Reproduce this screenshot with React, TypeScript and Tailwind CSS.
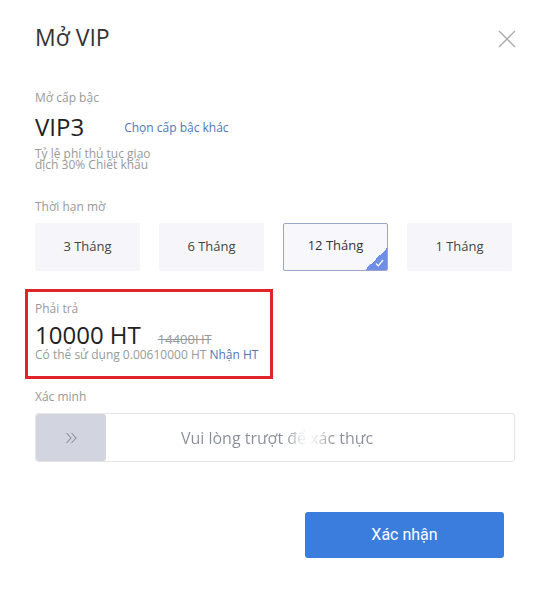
import React from 'react';

const durations = ['3 Tháng', '6 Tháng', '12 Tháng', '1 Tháng'];

const App: React.FC = () => {
  const [selected, setSelected] = React.useState(2);

  return (
    <div className="h-[594px] w-[548px] bg-white text-[#333] [font-family:'Open_Sans',sans-serif]">
      <div className="flex items-start justify-between pl-[35px] pr-[32px] pt-[22px]">
        <h2 className="text-[23px] leading-[30px] text-[#333]">Mở VIP</h2>
        <button className="mt-[8px] text-[#aaa]" aria-label="close">
          <svg width="18" height="18" viewBox="0 0 18 18" fill="none" stroke="currentColor" strokeWidth="1.3">
            <path d="M1 1 L17 17 M17 1 L1 17" />
          </svg>
        </button>
      </div>

      <div className="px-[35px]">
        <p className="mt-[38px] text-[12px] leading-[16px] text-[#999]">Mở cấp bậc</p>
        <div className="mt-[6px] flex items-center gap-[40px]">
          <span className="text-[24px] leading-[30px] text-[#222]">VIP3</span>
          <span className="mt-[2px] cursor-pointer text-[12px] text-[#4f77b4]">Chọn cấp bậc khác</span>
        </div>
        <p className="mt-[6px] w-[130px] text-[12px] leading-[11px] text-[#999]">
          Tỷ lệ phí thủ tục giao dịch 30% Chiết khấu
        </p>

        <p className="mt-[29px] text-[12px] leading-[16px] text-[#999]">Thời hạn mờ</p>
        <div className="mt-[8px] grid grid-cols-4 gap-[19px] pr-[1px]">
          {durations.map((label, i) => {
            const active = i === selected;
            return (
              <button
                key={label}
                onClick={() => setSelected(i)}
                className={`relative flex h-[48px] items-center justify-center overflow-hidden rounded-[2px] text-[13px] ${
                  active ? 'border border-[#9aa5c8] bg-[#f8f8fc] text-[#333]' : 'border border-[#f6f6fa] bg-[#f6f6fa] text-[#444]'
                }`}
              >
                <span className={active ? '-mt-[2px]' : ''}>{label}</span>
                {active && (
                  <span className="absolute bottom-0 right-0 h-[22px] w-[22px] bg-[linear-gradient(135deg,transparent_50%,#6f8ee8_50%)]">
                    <svg className="absolute bottom-[3px] right-[3px]" width="9" height="8" viewBox="0 0 9 8" fill="none" stroke="white" strokeWidth="1.2">
                      <path d="M1 4.5 L3.3 6.8 L8 1" />
                    </svg>
                  </span>
                )}
              </button>
            );
          })}
        </div>
      </div>

      <div className="ml-[25px] mt-[18px] w-[248px] border-[3px] border-[#e0242c] px-[7px] pb-[13px] pt-[9px]">
        <p className="text-[12px] leading-[16px] text-[#999]">Phải trả</p>
        <div className="mt-[5px] flex items-baseline gap-[17px]">
          <span className="text-[24px] leading-[26px] text-[#222]">10000 HT</span>
          <span className="text-[13px] leading-[16px] text-[#999] line-through">14400HT</span>
        </div>
        <p className="-mt-[1px] text-[12px] leading-[16px] text-[#999]">
          Có thể sử dụng 0.00610000 HT <span className="text-[#4f77b4]">Nhận HT</span>
        </p>
      </div>

      <div className="px-[35px]">
        <p className="mt-[10px] text-[12px] leading-[16px] text-[#999]">Xác minh</p>
        <div className="mt-[8px] flex h-[49px] w-[480px] items-center overflow-hidden rounded-[3px] border border-[#e6e6ea]">
          <div className="flex h-full w-[70px] items-center justify-center rounded-[3px] bg-[#d2d5e0] text-[#8a8f9e]">
            <svg width="13" height="12" viewBox="0 0 13 12" fill="none" stroke="currentColor" strokeWidth="1.1">
              <path d="M1.5 1 L6 6 L1.5 11 M6.5 1 L11 6 L6.5 11" />
            </svg>
          </div>
          <div className="flex-1 pr-[66px] text-center text-[16px] text-[#888]">
            <span className="bg-[linear-gradient(90deg,#898d98_0%,#898d98_55%,#e4e4e8_62%,#fff_67%,#ccc_73%,#898d98_79%,#898d98_100%)] bg-clip-text text-transparent">
              Vui lòng trượt để xác thực
            </span>
          </div>
        </div>
      </div>

      <div className="mt-[50px] flex justify-end pr-[44px]">
        <button className="h-[46px] w-[199px] rounded-[3px] bg-[#3a7ddd] text-[16px] text-white [font-family:Roboto,sans-serif]">
          Xác nhận
        </button>
      </div>
    </div>
  );
};

export default App;
